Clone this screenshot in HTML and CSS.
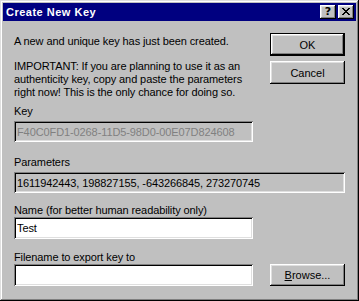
FILE: index.html
```html
<!DOCTYPE html>
<html lang="en">
<head>
    <meta charset="UTF-8">
    <title>Create New Key</title>
    <link rel="stylesheet" href="styles.css">
</head>
<body>
    <div class="window">
        <div class="titlebar">
            <span class="title">Create New Key</span>
            <div class="title-buttons">
                <button class="title-btn help">?</button>
                <button class="title-btn close">
                    <svg width="8" height="7" viewBox="0 0 8 7" shape-rendering="crispEdges">
                        <path d="M0 0h2v1h-2z M6 0h2v1h-2z M1 1h2v1h-2z M5 1h2v1h-2z M2 2h4v1h-4z M3 3h2v1h-2z M2 4h4v1h-4z M1 5h2v1h-2z M5 5h2v1h-2z M0 6h2v1h-2z M6 6h2v1h-2z" fill="#000"/>
                    </svg>
                </button>
            </div>
        </div>
        <div class="content">
            <div class="top">
                <div class="intro">
                    <p>A new and unique key has just been created.</p>
                    <p class="warning">IMPORTANT: If you are planning to use it as an authenticity key, copy and paste the parameters right now! This is the only chance for doing so.</p>
                </div>
                <div class="actions">
                    <button class="btn default">OK</button>
                    <button class="btn">Cancel</button>
                </div>
            </div>
            <div class="group key-group">
                <label for="key">Key</label>
                <input type="text" id="key" class="edit readonly disabled" value="F40C0FD1-0268-11D5-98D0-00E07D824608" readonly>
            </div>
            <div class="group params-group">
                <label for="params">Parameters</label>
                <input type="text" id="params" class="edit readonly wide" value="1611942443, 198827155, -643266845, 273270745" readonly>
            </div>
            <div class="group name-group">
                <label for="name">Name (for better human readability only)</label>
                <input type="text" id="name" class="edit tall" value="Test">
            </div>
            <div class="group file-group">
                <label for="filename">Filename to export key to</label>
                <div class="file-row">
                    <input type="text" id="filename" class="edit tall" value="">
                    <button class="btn"><u>B</u>rowse...</button>
                </div>
            </div>
        </div>
    </div>
</body>
</html>
```

FILE: styles.css
```css
body {
    margin: 0;
    padding: 0;
    background-color: #c0c0c0;
    font-family: "Liberation Sans", Arial, sans-serif;
    font-size: 11px;
    letter-spacing: -0.1px;
    color: #000;
}
.window {
    width: 359px;
    height: 301px;
    box-sizing: border-box;
    padding: 3px;
    background-color: #c0c0c0;
    box-shadow: inset -1px -1px #000, inset 1px 1px #dfdfdf, inset -2px -2px #808080, inset 2px 2px #fff;
}
.titlebar {
    height: 18px;
    background-color: #000080;
    display: flex;
    align-items: center;
    justify-content: space-between;
    padding-left: 3px;
    padding-right: 2px;
}
.title {
    color: #fff;
    font-weight: bold;
    font-size: 11px;
    letter-spacing: 0.5px;
    line-height: 18px;
}
.title-buttons {
    display: flex;
    gap: 2px;
}
.title-btn {
    width: 16px;
    height: 14px;
    padding: 0;
    border: none;
    background-color: #c0c0c0;
    box-shadow: inset -1px -1px #000, inset 1px 1px #fff, inset -2px -2px #808080, inset 2px 2px #dfdfdf;
    display: flex;
    align-items: center;
    justify-content: center;
}
.help {
    font-family: "DejaVu Sans", sans-serif;
    font-weight: bold;
    font-size: 11px;
    line-height: 14px;
    color: #000;
    padding-bottom: 1px;
}
.close svg {
    display: block;
    margin-bottom: 1px;
}
.content {
    padding: 0 11px;
}
.top {
    display: flex;
}
.intro {
    width: 245px;
    padding-top: 14px;
}
.intro p {
    margin: 0;
    line-height: 13px;
}
.intro .warning {
    margin-top: 12px;
}
.actions {
    margin-left: auto;
    padding-top: 12px;
    display: flex;
    flex-direction: column;
    gap: 5px;
}
.btn {
    width: 75px;
    height: 23px;
    padding: 0;
    border: none;
    background-color: #c0c0c0;
    font-family: "Liberation Sans", Arial, sans-serif;
    font-size: 11px;
    color: #000;
    box-shadow: inset -1px -1px #000, inset 1px 1px #fff, inset -2px -2px #808080, inset 2px 2px #dfdfdf;
}
.btn.default {
    box-shadow: inset 0 0 0 1px #000, inset -2px -2px #000, inset 2px 2px #fff, inset -3px -3px #808080, inset 3px 3px #dfdfdf;
}
.group label {
    display: block;
    line-height: 13px;
}
.key-group {
    margin-top: 6px;
}
.params-group {
    margin-top: 14px;
}
.name-group {
    margin-top: 11px;
}
.file-group {
    margin-top: 12px;
}
.edit {
    display: block;
    box-sizing: border-box;
    width: 239px;
    height: 21px;
    margin-top: 3px;
    padding: 0 3px;
    border: none;
    outline: none;
    background-color: #fff;
    font-family: "Liberation Sans", Arial, sans-serif;
    font-size: 11px;
    letter-spacing: -0.1px;
    color: #000;
    box-shadow: inset 1px 1px #808080, inset -1px -1px #fff, inset 2px 2px #000, inset -2px -2px #dfdfdf;
}
.edit.tall {
    height: 22px;
    margin-top: 0;
}
.edit.readonly {
    background-color: #c0c0c0;
}
.edit.disabled {
    color: #808080;
}
.edit.wide {
    width: 100%;
}
.file-row {
    display: flex;
    justify-content: space-between;
}
.file-row .btn {
    height: 22px;
}
```
